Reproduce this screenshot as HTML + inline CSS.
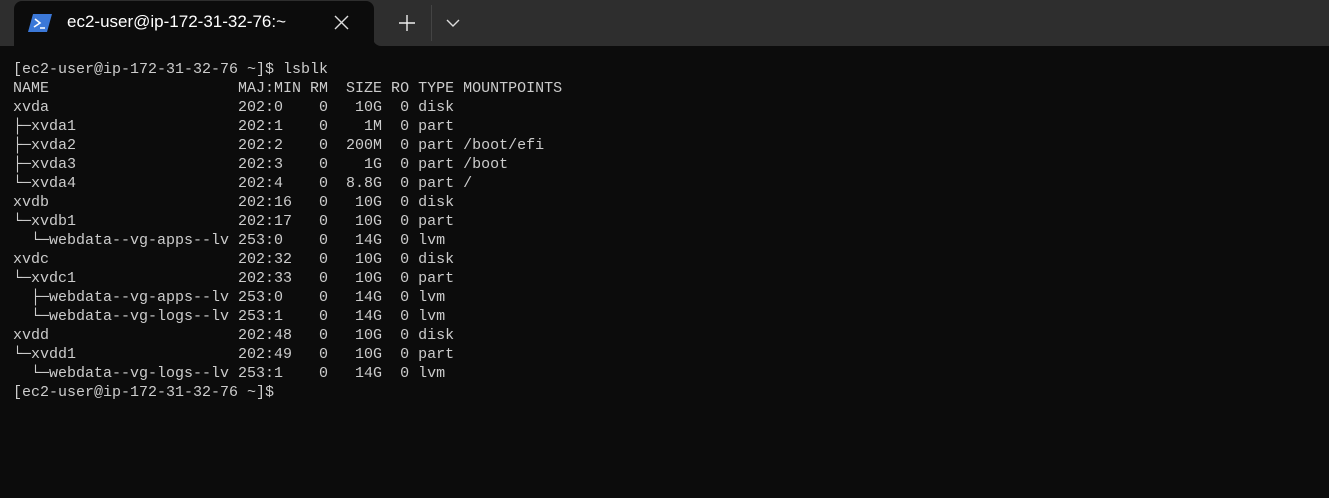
<!DOCTYPE html><html><head><style>
body{margin:0;width:1329px;height:498px;background:#0c0c0c;overflow:hidden;position:relative}
.bar{position:absolute;left:0;top:0;width:1329px;height:46px;background:#2e2e2e}
.tab{position:absolute;left:14px;top:1px;width:360px;height:47px;background:#0c0c0c;border-radius:8px 8px 0 0}
.title{position:absolute;left:67px;top:12px;font:17px "Liberation Sans",sans-serif;color:#fff}
pre{position:absolute;left:13px;top:60px;margin:0;font:15px/19px "Liberation Mono","DejaVu Sans Mono",monospace;color:#cccccc}
</style></head><body>
<div class="bar"></div>
<div style="position:absolute;left:373px;top:38px;width:10px;height:9px;background:#0c0c0c"></div>
<div style="position:absolute;left:373px;top:30px;width:16px;height:16px;background:#2e2e2e;border-bottom-left-radius:8px"></div>
<div class="tab"></div>
<svg style="position:absolute;left:28px;top:14px" width="24" height="18" viewBox="0 0 24 18"><path d="M5 0H24L19 18H0Z" fill="#3b78d8"/><path d="M7 5L12 9L6 13M12 14H17" stroke="#fff" stroke-width="1.6" fill="none"/></svg>
<div class="title">ec2-user@ip-172-31-32-76:~</div>
<svg style="position:absolute;left:334px;top:15px" width="15" height="15"><path d="M1 1L14 14M14 1L1 14" stroke="#ddd" stroke-width="1.4"/></svg>
<svg style="position:absolute;left:399px;top:15px" width="16" height="16"><path d="M8 0V16M0 8H16" stroke="#eee" stroke-width="1.4"/></svg>
<div style="position:absolute;left:431px;top:5px;width:1px;height:36px;background:#444"></div>
<svg style="position:absolute;left:446px;top:19px" width="14" height="8"><path d="M1 1L7 7L13 1" stroke="#ddd" stroke-width="1.4" fill="none"/></svg>
<pre>[ec2-user@ip-172-31-32-76 ~]$ lsblk
NAME                     MAJ:MIN RM  SIZE RO TYPE MOUNTPOINTS
xvda                     202:0    0   10G  0 disk
├─xvda1                  202:1    0    1M  0 part
├─xvda2                  202:2    0  200M  0 part /boot/efi
├─xvda3                  202:3    0    1G  0 part /boot
└─xvda4                  202:4    0  8.8G  0 part /
xvdb                     202:16   0   10G  0 disk
└─xvdb1                  202:17   0   10G  0 part
  └─webdata--vg-apps--lv 253:0    0   14G  0 lvm
xvdc                     202:32   0   10G  0 disk
└─xvdc1                  202:33   0   10G  0 part
  ├─webdata--vg-apps--lv 253:0    0   14G  0 lvm
  └─webdata--vg-logs--lv 253:1    0   14G  0 lvm
xvdd                     202:48   0   10G  0 disk
└─xvdd1                  202:49   0   10G  0 part
  └─webdata--vg-logs--lv 253:1    0   14G  0 lvm
[ec2-user@ip-172-31-32-76 ~]$</pre>
</body></html>
